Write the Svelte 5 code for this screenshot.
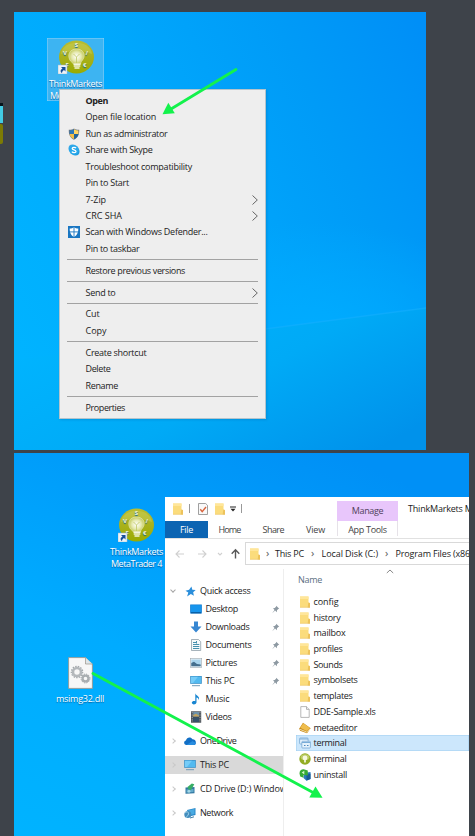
<script>
  const menu = [
    [
      { t: 'Open', bold: true, w: 22.5 }, { t: 'Open file location', w: 70.5 },
      { t: 'Run as administrator', icon: 'shield', w: 82 }, { t: 'Share with Skype', icon: 'skype', w: 67 },
      { t: 'Troubleshoot compatibility', w: 106.5 }, { t: 'Pin to Start', w: 43.5 },
      { t: '7-Zip', sub: true, w: 20.5 }, { t: 'CRC SHA', sub: true, w: 36.5 },
      { t: 'Scan with Windows Defender...', icon: 'defender', w: 122 }, { t: 'Pin to taskbar', w: 54 }
    ],
    [{ t: 'Restore previous versions', w: 99.5 }],
    [{ t: 'Send to', sub: true, w: 30 }],
    [{ t: 'Cut', w: 14 }, { t: 'Copy', w: 21 }],
    [{ t: 'Create shortcut', w: 61 }, { t: 'Delete', w: 25 }, { t: 'Rename', w: 32.5 }],
    [{ t: 'Properties', w: 39.5 }]
  ];
  const quick = [
    { t: 'Desktop', icon: 'desktop', pin: true, w: 32.5 }, { t: 'Downloads', icon: 'down', pin: true, w: 44 },
    { t: 'Documents', icon: 'docs', pin: true, w: 46 }, { t: 'Pictures', icon: 'pics', pin: true, w: 31.5 },
    { t: 'This PC', icon: 'pc', pin: true, w: 29 }, { t: 'Music', icon: 'music', w: 24 }, { t: 'Videos', icon: 'video', w: 26 }
  ];
  const places = [
    { t: 'OneDrive', icon: 'cloud', w: 36.5 }, { t: 'This PC', icon: 'pc', sel: true, w: 29 },
    { t: 'CD Drive (D:) Window', icon: 'cd', w: 86.5 }, { t: 'Network', icon: 'net', w: 33 }
  ];
  const files = [
    { t: 'config', icon: 'folder', w: 25 }, { t: 'history', icon: 'folder', w: 27 }, { t: 'mailbox', icon: 'folder', w: 32 },
    { t: 'profiles', icon: 'folder', w: 29 }, { t: 'Sounds', icon: 'folder', w: 29 }, { t: 'symbolsets', icon: 'folder', w: 44 },
    { t: 'templates', icon: 'folder', w: 39 }, { t: 'DDE-Sample.xls', icon: 'file', w: 62 }, { t: 'metaeditor', icon: 'book', w: 43.5 },
    { t: 'terminal', icon: 'windows', sel: true, w: 33 }, { t: 'terminal', icon: 'ball', w: 33 }, { t: 'uninstall', icon: 'uninst', w: 33.5 }
  ];

  // Spreads the letters so that the label takes exactly w pixels.
  function fit(node, w) {
    const width = node.getBoundingClientRect().width;
    node.style.letterSpacing = (w - width) / node.textContent.length + 'px';
  }
</script>

{#snippet label(t, w)}<span class="label" use:fit={w}>{t}</span>{/snippet}

{#snippet icon(name)}
  <svg class="ic" viewBox="0 0 12 12">
    {#if name === 'shield'}
      <path d="M6 .4C4.600 1.500 2.500 1.900.8 1.800 .6 6.500 2 9.900 6 11.700 10 9.900 11.400 6.500 11.200 1.800 9.500 1.900 7.400 1.500 6 .4z" fill="#6d7680" />
      <path d="M6 1.300C4.600 2.200 3.100 2.600 1.600 2.600V6H6z" fill="#2b77b8" /><path d="M6 1.300C7.400 2.200 8.900 2.600 10.400 2.600V6H6z" fill="#ffd563" />
      <path d="M1.600 6C2 8.500 3.500 10 6 11V6z" fill="#f2be48" /><path d="M10.400 6C10 8.500 8.500 10 6 11V6z" fill="#20639b" />
    {:else if name === 'skype'}
      <circle cx="4.500" cy="4.500" r="4" fill="#35a8e8" /><circle cx="7.500" cy="7.500" r="4" fill="#1e9be0" /><circle cx="6" cy="6" r="4.800" fill="#28a8ea" />
      <path d="M8 4.100C7.200 3 4.200 3 4.200 4.500 4.200 6.200 8 5.500 8 7.400 8 9 4.800 9 3.900 7.700" fill="none" stroke="#fff" stroke-width="1.300" />
    {:else if name === 'defender'}
      <rect width="12" height="12" fill="#1976c2" /><path d="M6 1.300C4.800 2.200 3.400 2.600 1.700 2.600 1.700 6.800 2.700 9.300 6 10.900 9.300 9.300 10.300 6.800 10.300 2.600 8.600 2.600 7.200 2.200 6 1.300z" fill="#fff" />
      <path d="M6 1V11M1.500 5.900H10.500" stroke="#1976c2" stroke-width=".9" />
    {:else if name === 'folder'}
      <path d="M1 .5H9.500V6.500L11 7.300V11.500H1z" fill="#fbdc7c" /><path d="M1 .5H9.500V3H1z" fill="#ffe69a" /><path d="M9.300 6.500 11 7V11.500H8.700z" fill="#edc25b" /><path d="M1 11.300H11" stroke="#e8c168" stroke-width=".5" />
    {:else if name === 'file'}
      <path d="M1.800.6H7.500L10.200 3.400V11.400H1.800z" fill="#fff" stroke="#9b9b9b" stroke-width=".7" /><path d="M7.500.6V3.400H10.200" fill="#eee" stroke="#9b9b9b" stroke-width=".7" />
    {:else if name === 'check'}
      <path d="M1.500.5H8.700L10.500 2.300V11.500H1.500z" fill="#f9f9f9" stroke="#888" stroke-width=".8" /><path d="M3.300 6.300 5.200 8.600 9 4" stroke="#d9633c" stroke-width="1.400" fill="none" />
    {:else if name === 'book'}
      <path d="M.3 6.500 4 .8 11.700 6.300 8 11.200 1 8.700z" fill="#c68a1c" /><path d="M1.300 5.700 4.300 1.200 10.900 6 7.600 9z" fill="#efbd4c" /><path d="M1 7.400 7.700 10 11.200 6.700" fill="none" stroke="#fff1c2" stroke-width=".8" />
    {:else if name === 'windows'}
      <g stroke="#6a9fcf" stroke-width=".7" fill="#e5f2fc"><rect x=".6" y="1" width="8.500" height="6" rx=".8" /><rect x="2.800" y="4.300" width="8.600" height="6.700" rx=".8" /></g><path d="M1 2H9M3 5.500H11.200" stroke="#79acd8" stroke-width="1" /><path d="M5 8.500H6.500M8 8.500H9.500" stroke="#4c89bf" />
    {:else if name === 'ball'}
      <circle cx="6" cy="6" r="5.700" fill="#93ad23" /><ellipse cx="6" cy="4.200" rx="4.300" ry="3" fill="#bdcc68" /><circle cx="6" cy="5" r="2.400" fill="#f6f8df" /><path d="M5 7H7V9.500H5z" fill="#e8edc4" />
    {:else if name === 'uninst'}
      <path d="M5 4 11.500 3V10L7.500 11.700 4.500 9z" fill="#2979bd" /><path d="M7.500 6 11.500 4.500V10L7.500 11.500z" fill="#195a94" /><path d="M.5 4.500C.5.800 3 0 5.500.4L8.800 1.600V6.500L4.500 6V8.700L1.200 7.500z" fill="#37aa35" /><path d="M2.700 3.600 5.300 1.800V5.500z" fill="#d6f4cd" />
    {:else if name === 'desktop'}
      <rect x=".2" y="1.500" width="11.600" height="9" fill="#0877ce" /><path d="M.8 2.100H11.200V9H.8z" fill="#1795ed" /><path d="M1 9.800H11" stroke="#0a5797" />
    {:else if name === 'down'}
      <path d="M4 .5H8V5.500H11.500L6 11.500.5 5.500H4z" fill="#3787d2" />
    {:else if name === 'docs'}
      <path d="M1.500.5H8.500L10.700 2.700V11.500H1.500z" fill="#f5f9fb" stroke="#83939e" stroke-width=".7" /><path d="M3 3.500H6M3 5.500H9.300M3 7.500H9.300M3 9.500H9.300" stroke="#4690ae" /><path d="M6.500 2V4.500" stroke="#4690ae" />
    {:else if name === 'pics'}
      <rect x=".3" y="1.500" width="11.400" height="8.800" fill="#f4f6f8" stroke="#9ba8b1" stroke-width=".6" /><path d="M1.300 2.500H10.700V9.300H1.300z" fill="#a9d4ed" /><path d="M1.300 6 4 4.800 7 7 10.700 7.500V9.300H1.300z" fill="#456f8e" />
    {:else if name === 'pc'}
      <rect x=".2" y="1" width="11.600" height="7.800" fill="#3b8ec5" /><rect x=".9" y="1.700" width="10.200" height="6.400" fill="#52baf0" /><path d="M1 1.700H8L3 8.100H.9z" fill="#75ccf8" /><path d="M2 10.700H10" stroke="#6f9ab7" stroke-width="1" />
    {:else if name === 'music'}
      <path d="M5.300.3C6 3 10.500 3.300 8.700 7.200 8.700 5.500 7.700 4.900 6.500 4.500V9.500C6 12 1.700 12 1.800 9.600 2 8 4 7.600 5.300 8.200z" fill="#1685d1" />
    {:else if name === 'video'}
      <rect x="1" y=".3" width="10.200" height="11.400" fill="#454b52" /><path d="M2.200 1V11M10 1V11" stroke="#d3d7da" stroke-width=".8" stroke-dasharray=".9 .8" /><rect x="3.200" y="1" width="5.800" height="4.500" fill="#6e93ad" /><rect x="3.200" y="6.400" width="5.800" height="4.500" fill="#35516b" /><path d="M3.200 4 6 2.700 9 4.500V5.500H3.200z" fill="#c3a35d" />
    {:else if name === 'cloud'}
      <path d="M2.500 10C-.7 9.700-.4 6 2 5.500 2.500 2.500 6.500 1 8.500 4.300 11 4.300 12 6 11.800 7.500 12 9 11 10 9.800 10z" fill="#126fc6" /><path d="M2.500 10 8.500 6 11.700 8C11.700 9.300 11 10 9.800 10z" fill="#278de0" />
    {:else if name === 'cd'}
      <path d="M1.500 4.500 10.500 4V10.300L1.500 10.800z" fill="#3478a1" /><path d="M2.500 6.500 9.500 6V9L2.500 9.700z" fill="#64abcc" /><path d="M3.500 4 7.800.5 10.300 1.200 7 7 4.500 6.500z" fill="#37ad65" /><circle cx="5" cy="8.300" r="1.400" fill="#a7d9e7" />
    {:else if name === 'net'}
      <path d="M3 3 11.500 1V8L5 9.500z" fill="#2888c9" /><path d="M3.800 3.500 10.500 2V7L4.800 8.400z" fill="#49aae2" /><circle cx="3.800" cy="7.500" r="3.500" fill="#438dbd" /><path d="M1 6C3 4 5 5 4.500 7S3 8.500 2.500 10.500" stroke="#a3d5ed" fill="none" /><path d="M6 11 10 9.800" stroke="#3f7da6" />
    {:else if name === 'star'}
      <path d="M7 .5 8 4 11.700 4.300 8.900 6.900 9.700 10.700 6.400 8.700 2.300 11.400 3.600 7.200.5 5.200 4.500 4.200z" fill="#2a8edb" />
    {:else if name === 'pin'}
      <path d="M7 1 11 5 9.700 5.300 8 7 7.800 9.500 5.500 7.300 1.500 11 4.700 6.500 2.700 4.300 5 4.100 6.700 2.400z" fill="#8d99a2" />
    {/if}
  </svg>
{/snippet}

{#snippet bulb()}
  <svg class="bulb" viewBox="0 0 36 34">
    <defs><linearGradient id="olive" x1="0" y1="0" x2="0" y2="1"><stop offset="0" stop-color="#b9bd32" /><stop offset=".5" stop-color="#a9b11c" /><stop offset="1" stop-color="#9aab00" /></linearGradient>
      <radialGradient id="glow"><stop offset="0" stop-color="#fff" /><stop offset=".6" stop-color="#e6e9b0" /><stop offset="1" stop-color="#c5cc60" /></radialGradient></defs>
    <ellipse cx="18.500" cy="17" rx="17.500" ry="16.400" fill="url(#olive)" />
    <path d="M3 14C5-1 32-1 34 14 25 10 12 10 3 14z" fill="#ccd15c" opacity=".45" />
    <path d="M12.500 21C9 16 11 9 18.500 9S28 16 24.500 20C22.800 22 22.700 23 22.500 24H15.500C15 23 14 22.500 12.500 21z" fill="url(#glow)" stroke="#e6eab9" stroke-width=".7" />
    <path d="M15.500 24.200H22.500M15.700 26.100H22.300M16.500 28H21.500" stroke="#f3f5dc" stroke-width="1.500" />
    <path d="M18.500 23V17L15.500 14M18.500 17L21.500 14" stroke="#bec865" stroke-width=".8" fill="none" />
    <g fill="#f4f6dc" font-family="Open Sans, sans-serif" font-size="6" font-weight="700"><text x="16.700" y="6.600">S</text><text x="5" y="15">V</text><text x="27.500" y="15">/</text><text x="7.500" y="27">F</text><text x="25" y="27">€</text></g>
    <rect x="0" y="25" width="9" height="9" fill="#edf3f7" stroke="#a3b8c4" stroke-width=".5" />
    <path d="M3 27H7.500V31.500L6 30C4.500 31 4 32 4 33.300 1.800 31.500 2.500 29.500 4.500 28.500z" fill="#174f9a" />
  </svg>
{/snippet}

<main>
  <div class="edge"><i class="dark"></i><i class="cyan"></i><i class="olive"></i></div>

  <section class="desk one">
    <svg class="beam" viewBox="0 0 412 438"><defs><linearGradient id="b" x1="0" x2="1" y1=".2" y2=".8"><stop offset="0" stop-color="#00b5ff" /><stop offset=".55" stop-color="#00aaf6" /><stop offset="1" stop-color="#0092eb" /></linearGradient></defs>
      <path d="M0 348 251 317 412 296V438H0z" fill="url(#b)" /><path d="M251 317 412 296" stroke="#19b0ff" stroke-width="1.500" opacity=".5" /></svg>
    <div class="shortcut selected">{@render bulb()}<p>{@render label('ThinkMarkets', 53)}</p><p>{@render label('MetaTrader 4', 51)}</p></div>
    <div class="menu">
      {#each menu as group, g}
        {#if g}<hr />{/if}
        {#each group as m}
          <div class="item" class:bold={m.bold}>
            <span class="slot">{#if m.icon}{@render icon(m.icon)}{/if}</span>{@render label(m.t, m.w)}
            {#if m.sub}<svg class="sub" viewBox="0 0 6 10"><path d="M.5.500 5.300 5 .5 9.500" fill="none" stroke="#555" stroke-width=".9" /></svg>{/if}
          </div>
        {/each}
      {/each}
    </div>
  </section>

  <section class="desk two">
    <div class="shortcut second">{@render bulb()}<p>{@render label('ThinkMarkets', 53)}</p><p>{@render label('MetaTrader 4', 51)}</p></div>
    <div class="dll">
      <svg viewBox="0 0 25 32"><path d="M.6.600H17.500L24.400 7V31.400H.6z" fill="#f7f7f7" stroke="#9a9287" stroke-width=".8" /><path d="M17.500.600V7H24.400" fill="#dfe6ea" stroke="#9a9287" stroke-width=".7" />
        <g fill="none"><circle cx="9" cy="15" r="4" stroke="#b4b8bb" stroke-width="2.600" /><circle cx="9" cy="15" r="5.700" stroke="#a3a8ac" stroke-width="1.200" stroke-dasharray="1.500 1.200" /><circle cx="17.500" cy="21.500" r="2.900" stroke="#a9aeb1" stroke-width="2.200" /><circle cx="17.500" cy="21.500" r="4.400" stroke="#999ea2" stroke-width="1" stroke-dasharray="1.300 1" /></g></svg>
      <p>{@render label('msimg32.dll', 48)}</p>
    </div>

    <div class="explorer">
      <header>
        <div class="title">
          <div class="tools">{@render icon('folder')}<i></i>{@render icon('check')}{@render icon('folder')}<svg class="drop" viewBox="0 0 6 6"><path d="M0 1H6" stroke="#222" /><path d="M.5 2.800H5.500L3 5.500z" fill="#222" /></svg><i></i></div>
          <div class="manage">{@render label('Manage', 31.500)}</div>
          <div class="caption">{@render label('ThinkMarkets MetaTrader', 104)}</div>
        </div>
        <div class="tabs">
          <b>{@render label('File', 13)}</b>
          <div class="tab home">{@render label('Home', 22)}</div><div class="tab share">{@render label('Share', 21.500)}</div><div class="tab view">{@render label('View', 19)}</div>
          <div class="apptools">{@render label('App Tools', 38.500)}</div>
        </div>
      </header>
      <nav>
        <svg class="arrows" viewBox="0 0 80 24" fill="none"><g stroke="#d0d0d0" stroke-width="1.100"><path d="M19 12H11M14.500 8.500 11 12 14.500 15.500M33 12H41M37.500 8.500 41 12 37.500 15.500" /><path d="M53 11 55 13 57 11" /></g><path d="M70.500 16.500V8M66.700 11.700 70.500 7.800 74.300 11.700" stroke="#585858" stroke-width="1.400" /></svg>
        <div class="address">{@render icon('folder')}<em class="c1">›</em>{@render label('This PC', 29)}<em class="c2">›</em>{@render label('Local Disk (C:)', 56.500)}<em class="c3">›</em>{@render label('Program Files (x86)', 77)}</div>
      </nav>
      <div class="body">
        <aside>
          <div class="row quick"><span class="chev down"></span>{@render icon('star')}{@render label('Quick access', 50.500)}</div>
          {#each quick as q}<div class="row nested">{@render icon(q.icon)}{@render label(q.t, q.w)}{#if q.pin}<span class="pin">{@render icon('pin')}</span>{/if}</div>{/each}
          <div class="places">{#each places as p}<div class="row place" class:sel={p.sel}><span class="chev"></span>{@render icon(p.icon)}{@render label(p.t, p.w)}</div>{/each}</div>
        </aside>
        <div class="list">
          <div class="head">{@render label('Name', 24)}<svg viewBox="0 0 8 5"><path d="M.8 4 4 1 7.200 4" fill="none" stroke="#888" /></svg></div>
          {#each files as f}<div class="file" class:sel={f.sel}>{@render icon(f.icon)}{@render label(f.t, f.w)}</div>{/each}
        </div>
      </div>
    </div>
  </section>

  <svg class="pointers" viewBox="0 0 475 836"><g stroke="#13f24c" stroke-width="2.800" stroke-linecap="round"><path d="M236 69.500 171 109" /><path d="M93 673.500 314 793" /></g><g fill="#13f24c"><path d="M162.500 114.300 168.300 102.800 174.800 113.300z" /><path d="M322.500 797.800 309.300 797.600 315.500 786.500z" /></g></svg>
</main>

<style>
  main { position: relative; box-sizing: border-box; width: 475px; height: 836px; padding: 12px 0 0 14px; display: flex; flex-direction: column; gap: 3px; overflow: hidden; background: #3e434a; font: 9px/12px "Open Sans", "Noto Sans", sans-serif; color: #222; }
  p { margin: 0; }
  .label { white-space: nowrap; flex: none; }
  .ic { width: 12px; height: 12px; flex: none; display: block; }
  .edge { position: absolute; left: 0; top: 103px; width: 3px; }
  .edge i { display: block; } .dark { height: 3px; background: #07141b; } .cyan { height: 17px; background: #42cbe3; } .olive { height: 20px; margin-top: 1px; background: #7c7b04; border-radius: 0 2px 2px 0; }
  .desk { position: relative; overflow: hidden; flex: none; }
  .one { width: 412px; height: 438px; background: radial-gradient(ellipse 200px 110px at 300px 320px, #00acff 0%, #00acff00 100%), linear-gradient(65deg, #00b4ff 5%, #00a9fd 45%, #009bf7 75%, #008ff7 98%); }
  .two { width: 455px; height: 383px; background: linear-gradient(25deg, #00b3ff 0%, #00abff 40%, #0090f6 90%); }
  .beam { position: absolute; inset: 0; }
  .shortcut { position: absolute; width: 57px; display: flex; flex-direction: column; align-items: center; color: #fff; line-height: 11.500px; text-shadow: 0 1px 1px #0058a0; }
  .selected { left: 33px; top: 26px; height: 63px; background: #3db4f2; box-shadow: inset 0 0 0 .5px #8fd2f7; box-sizing: border-box; padding-top: 2px; }
  .second { left: 94px; top: 55px; }
  .bulb { width: 36px; height: 34px; margin-bottom: 4px; }
  .second .bulb { margin-left: -2px; }
  .menu { position: absolute; left: 45px; top: 77px; width: 206.500px; height: 330px; box-sizing: border-box; border: 1px solid #b4c4cc; background: #eee; padding-top: 2.500px; box-shadow: 1px 1px 2px #0070b055; }
  .item { height: 16.470px; display: flex; align-items: center; position: relative; }
  .bold { font-weight: 700; }
  .slot { width: 18px; padding-left: 7.500px; flex: none; } .slot .ic { width: 12px; }
  .sub { width: 6px; height: 10px; margin-left: auto; margin-right: 7px; }
  hr { height: 1px; border: 0; background: #a2a2a2; margin: 2.200px 7px 2.200px 7px; }
  .dll { position: absolute; left: 41px; top: 204px; width: 50px; display: flex; flex-direction: column; align-items: center; color: #fff; text-shadow: 0 1px 1px #0064a5; }
  .dll svg { width: 25px; height: 32px; margin-bottom: 4px; }
  .explorer { position: absolute; left: 151px; top: 44px; width: 304px; height: 339px; background: #fff; overflow: hidden; display: flex; flex-direction: column; }
  header { height: 42px; flex: none; box-sizing: border-box; border-bottom: 1px solid #e1e1e1; }
  .title { height: 23.500px; display: flex; }
  .tools { width: 172px; flex: none; box-sizing: border-box; display: flex; align-items: center; padding-left: 7px; }
  .tools i { width: 1px; height: 9px; background: #999; margin: 0 7px 0 5px; }
  .tools .ic + .ic { margin-left: 4.500px; } .drop { width: 6px; height: 6px; margin-left: 4.500px; } .tools .drop + i { margin-left: 5px; }
  .manage { width: 61px; height: 20px; margin-top: 3.500px; background: #e8c6fb; display: flex; align-items: center; justify-content: center; flex: none; color: #50415a; }
  .caption { padding: 6px 0 0 10px; }
  .tabs { display: flex; height: 17.500px; line-height: 13px; }
  .tabs b { width: 43px; font-weight: 400; background: #0c64b2; color: #fff; display: flex; align-items: center; justify-content: center; }
  .tab { display: flex; align-items: center; color: #444; } .home { width: 44px; padding-left: 10.500px; box-sizing: border-box; } .share { width: 43px; padding-left: 10.500px; box-sizing: border-box; } .view { width: 42px; padding-left: 11px; box-sizing: border-box; }
  .apptools { width: 61px; box-sizing: border-box; border: solid #e6e2e8; border-width: 0 1px; display: flex; align-items: center; justify-content: center; color: #444; height: 15px; padding-top: 2.500px; }
  nav { display: flex; height: 30px; flex: none; padding-top: 3px; box-sizing: border-box; }
  .arrows { width: 80px; height: 24px; flex: none; }
  .address { flex: none; width: 240px; height: 23px; box-sizing: border-box; border: 1px solid #d9d9d9; display: flex; align-items: center; padding-left: 2.500px; }
  em { font-style: normal; font-size: 11px; color: #555; width: 14.500px; flex: none; text-align: center; padding-bottom: 2px; box-sizing: border-box; } em.c2 { width: 17.500px; } em.c3 { width: 17.500px; }
  .body { display: flex; height: 267px; }
  aside { width: 119px; flex: none; overflow: hidden; border-right: 1px solid #eee; padding-top: 13px; box-sizing: border-box; }
  .row { height: 18px; display: flex; align-items: center; padding-left: 6px; }
  .chev { width: 4px; height: 4px; box-sizing: border-box; border: solid #c9c9c9; border-width: 1px 1px 0 0; transform: rotate(45deg); flex: none; margin-right: 9px; }
  .chev.down { transform: translateY(-1px) rotate(135deg); border-color: #a5a5a5; }
  .quick .ic { width: 11px; height: 11px; margin: 0 4px 0 1px; }
  .nested { padding-left: 24.500px; gap: 4px; position: relative; }
  .pin { margin-left: auto; margin-right: 3px; } .pin .ic { width: 9px; height: 9px; }
  .places { padding-top: 6px; } .place { height: 18px; margin-bottom: 6px; overflow: hidden; } .place .ic { margin-right: 4.500px; margin-left: -.5px; }
  .place.sel { background: #d9d9d9; }
  .list { flex: 1; padding-left: 12px; }
  .head { height: 25px; padding: 5px 0 0 2px; box-sizing: border-box; color: #5c6f82; display: flex; }
  .head svg { width: 8px; height: 5px; margin: -5px 0 0 64px; }
  .file { height: 15.730px; display: flex; align-items: center; padding-left: 3px; gap: 2.500px; } .file.sel { background: #cce7fc; box-shadow: inset 0 0 0 .5px #9dcdf0; }
  .pointers { position: absolute; left: 0; top: 0; width: 475px; height: 836px; pointer-events: none; }
</style>
